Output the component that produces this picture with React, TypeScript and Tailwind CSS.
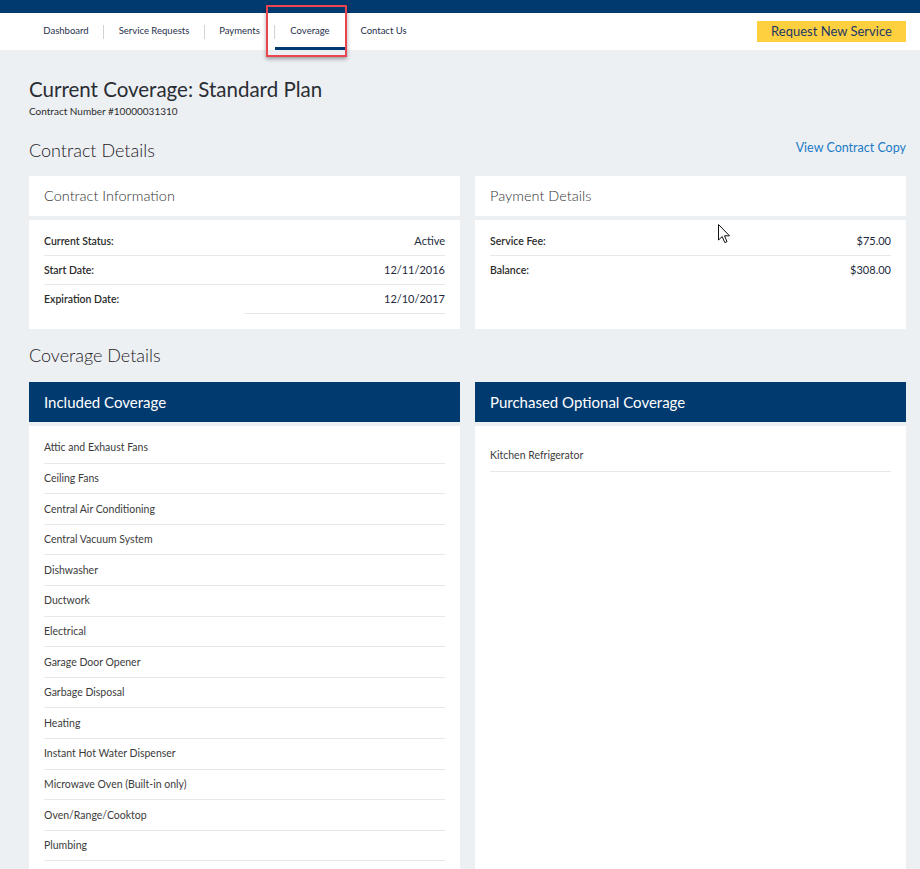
import React from 'react';

const included = [
  'Attic and Exhaust Fans',
  'Ceiling Fans',
  'Central Air Conditioning',
  'Central Vacuum System',
  'Dishwasher',
  'Ductwork',
  'Electrical',
  'Garage Door Opener',
  'Garbage Disposal',
  'Heating',
  'Instant Hot Water Dispenser',
  'Microwave Oven (Built-in only)',
  'Oven/Range/Cooktop',
  'Plumbing',
];

const navItems = [
  { label: 'Dashboard', w: 'w-[74px]' },
  { label: 'Service Requests', w: 'w-[100px]' },
  { label: 'Payments', w: 'w-[69px]' },
  { label: 'Coverage', w: 'w-[70px]' },
  { label: 'Contact Us', w: 'w-[77px]' },
];

function InfoRow({ label, value, last, half }: { label: string; value: string; last?: boolean; half?: boolean }) {
  return (
    <div className="relative flex h-[29px] items-center justify-between">
      <span className="text-[10.5px] font-semibold text-[#2b2b2b]">{label}</span>
      <span className="text-[11px] text-[#1e2a3c]">{value}</span>
      {!last && <div className="absolute bottom-0 left-0 right-0 h-px bg-[#e6e8eb]" />}
      {half && <div className="absolute bottom-0 left-[200px] right-0 h-px bg-[#e6e8eb]" />}
    </div>
  );
}

export default function App() {
  return (
    <div className="relative min-h-[869px] bg-[#edf0f3] font-['Lato','Noto_Sans',sans-serif] text-[#2b2b2b]">
      {/* top strip */}
      <div className="h-[13px] bg-[#013a6f]" />

      {/* nav */}
      <div className="flex h-[37px] items-center justify-between bg-white pl-[29px] pr-[14px]">
        <div className="flex h-full items-center">
          {navItems.map((item, i) => {
            const active = item.label === 'Coverage';
            const sep = i > 0 && item.label !== 'Contact Us';
            return (
              <React.Fragment key={item.label}>
                {sep && <div className="h-[14px] w-px bg-[#cfd3d8]" />}
                <div className={`relative flex h-full items-center justify-center text-[9.5px] text-[#1f2f4b] ${item.w}`}>
                  {item.label}
                  {active && <div className="absolute bottom-0 left-0 right-0 h-[3px] bg-[#013a6f]" />}
                </div>
              </React.Fragment>
            );
          })}
        </div>
        <button className="flex h-[21px] w-[149px] items-center justify-center bg-[#fed03f] text-[13px] text-[#1d3766]">
          Request New Service
        </button>
      </div>

      {/* annotation box around Coverage tab */}
      <div className="pointer-events-none absolute left-[266px] top-[5px] h-[52px] w-[81px] border-2 border-[#ea4650] shadow-[0_2px_4px_rgba(0,0,0,0.35)]" />

      <main className="pl-[29px] pr-[14px]">
        <h1 className="mt-[27px] text-[20.5px] leading-[24px] text-[#2a2d33]">Current Coverage: Standard Plan</h1>
        <p className="mt-[3px] text-[10px] leading-[14px] text-[#2b2b2b]">Contract Number #10000031310</p>

        <div className="mt-[20px] flex items-start justify-between">
          <h2 className="text-[18px] font-light leading-[24px] text-[#1e2126]">Contract Details</h2>
          <a className="mt-[2px] text-[12.5px] leading-[16px] text-[#1b7bc8]">View Contract Copy</a>
        </div>

        <div className="mt-[14px] grid grid-cols-2 gap-[15px]">
          <div className="flex flex-col gap-[4px]">
            <div className="flex h-[40px] items-center bg-white px-[15px] text-[14.5px] font-light text-[#333]">Contract Information</div>
            <div className="flex-1 bg-white px-[15px] pb-[15px] pt-[7px]">
              <InfoRow label="Current Status:" value="Active" />
              <InfoRow label="Start Date:" value="12/11/2016" />
              <InfoRow label="Expiration Date:" value="12/10/2017" last half />
            </div>
          </div>
          <div className="flex flex-col gap-[4px]">
            <div className="flex h-[40px] items-center bg-white px-[15px] text-[14.5px] font-light text-[#333]">Payment Details</div>
            <div className="flex-1 bg-white px-[15px] pb-[15px] pt-[7px]">
              <InfoRow label="Service Fee:" value="$75.00" />
              <InfoRow label="Balance:" value="$308.00" last />
            </div>
          </div>
        </div>

        <h2 className="mt-[14px] text-[18px] font-light leading-[24px] text-[#1e2126]">Coverage Details</h2>

        <div className="mt-[15px] grid grid-cols-2 gap-[15px]">
          <div className="flex flex-col gap-[4px]">
            <div className="flex h-[40px] items-center bg-[#013a6f] px-[15px] text-[15px] text-white">Included Coverage</div>
            <div className="flex-1 bg-white px-[15px] pb-[20px] pt-[7px]">
              {included.map((c) => (
                <div key={c} className="flex h-[30.6px] items-center border-b border-[#e6e8eb] pt-px text-[10.5px] text-[#3c3c3c]">
                  {c}
                </div>
              ))}
            </div>
          </div>
          <div className="flex flex-col gap-[4px]">
            <div className="flex h-[40px] items-center bg-[#013a6f] px-[15px] text-[15px] text-white">Purchased Optional Coverage</div>
            <div className="flex-1 bg-white px-[15px] pt-[15px]">
              <div className="flex h-[30.6px] items-center border-b border-[#e6e8eb] pt-px text-[10.5px] text-[#3c3c3c]">
                Kitchen Refrigerator
              </div>
            </div>
          </div>
        </div>
      </main>

      {/* mouse cursor */}
      <svg className="pointer-events-none absolute left-[718px] top-[224px]" width="13" height="20" viewBox="0 0 13 20">
        <path d="M0.5 0.5 L0.5 16 L4.2 12.6 L6.8 18.6 L9 17.6 L6.5 11.8 L11.5 11.8 Z" fill="white" stroke="#111" strokeWidth="1" strokeLinejoin="round" />
      </svg>
    </div>
  );
}
